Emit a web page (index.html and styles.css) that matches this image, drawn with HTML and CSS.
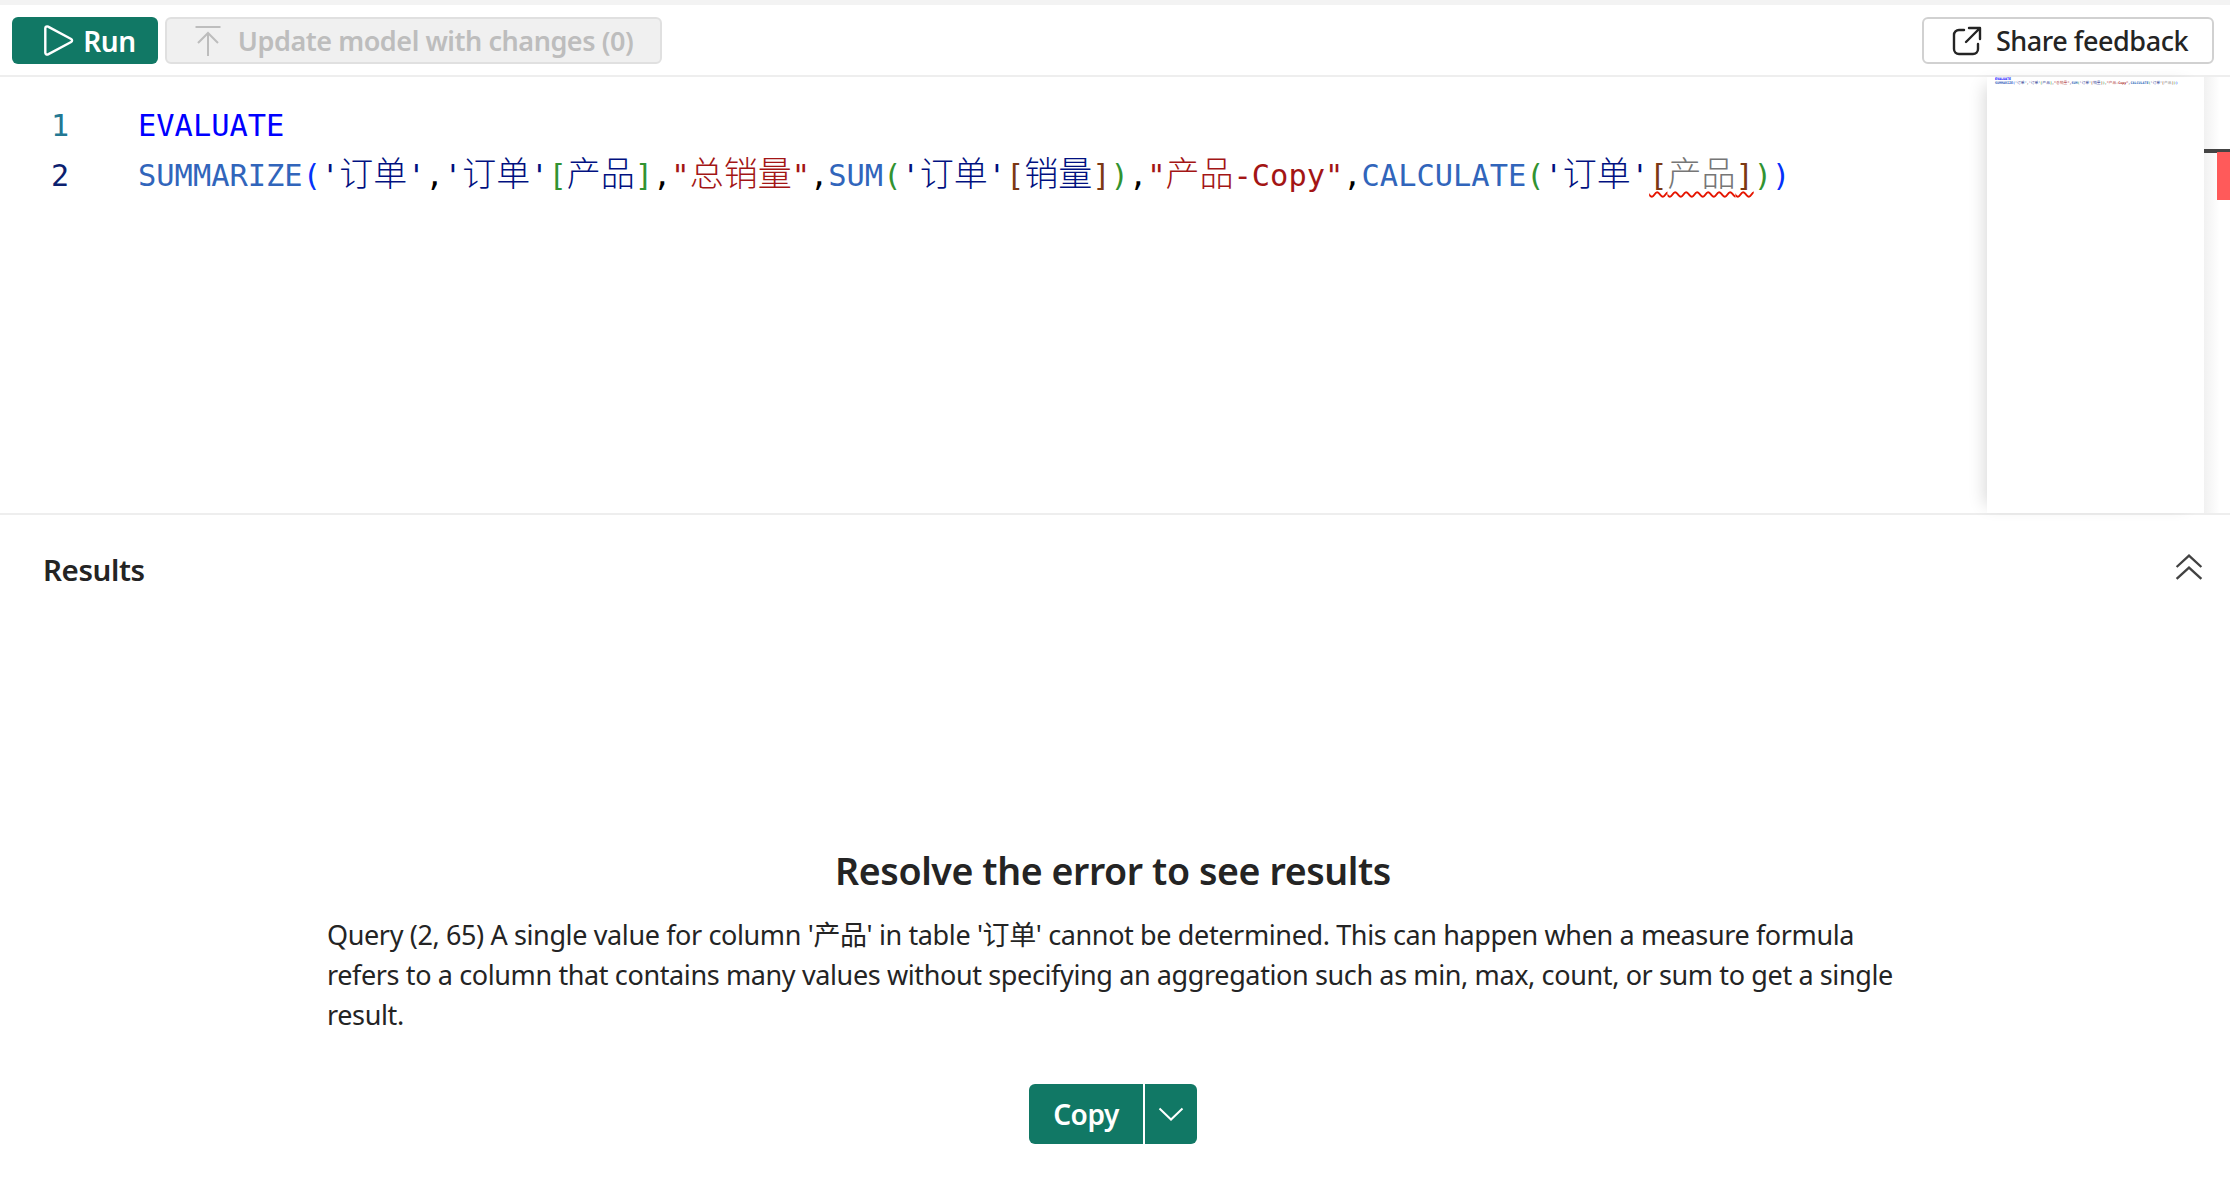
FILE: index.html
```html
<!DOCTYPE html>
<html lang="en">
<head>
<meta charset="utf-8">
<title>DAX query</title>
<link rel="stylesheet" href="styles.css">
</head>
<body>
<div class="page">
  <div class="topshade"></div>
  <header class="toolbar">
    <button class="btn run">
      <svg class="ic-play" viewBox="0 0 30 30"><path d="M3 3.800c0-1.300 1.400-2 2.500-1.400l21 11.200c1.100.6 1.100 2.200 0 2.800l-21 11.200C4.400 28.200 3 27.500 3 26.200z" fill="none" stroke="#fff" stroke-width="2.200" stroke-linejoin="round"/></svg>
      <span>Run</span>
    </button>
    <button class="btn update">
      <svg class="ic-up" viewBox="0 0 28 32"><path d="M1 2h25M13.500 31V8M3.500 18 13.500 8l10 10" fill="none" stroke="#bdbdbd" stroke-width="2"/></svg>
      <span>Update model with changes (0)</span>
    </button>
    <button class="btn share">
      <svg class="ic-share" viewBox="0 0 30 30"><path d="M12 4H7a5 5 0 0 0-5 5v14a5 5 0 0 0 5 5h14a5 5 0 0 0 5-5v-5M17 2h11v11M28 2 14 16" fill="none" stroke="#242424" stroke-width="2.400" stroke-linecap="round" stroke-linejoin="round"/></svg>
      <span>Share feedback</span>
    </button>
  </header>
  <section class="editor">
    <div class="gutter"><div class="ln1">1</div><div class="ln2">2</div></div>
    <div class="code">
      <div class="line"><span class="kw">EVALUATE</span></div>
      <div class="line"><span class="fn">SUMMARIZE</span><span class="p1">(</span><span class="tb">'<i>订单</i>'</span>,<span class="tb">'<i>订单</i>'</span><span class="p2">[</span><span class="tb"><i>产品</i></span><span class="p2">]</span>,<span class="str">"<i>总销量</i>"</span>,<span class="fn">SUM</span><span class="p2">(</span><span class="tb">'<i>订单</i>'</span><span class="p3">[</span><span class="tb"><i>销量</i></span><span class="p3">]</span><span class="p2">)</span>,<span class="str">"<i>产品</i>-Copy"</span>,<span class="fn">CALCULATE</span><span class="p2">(</span><span class="tb">'<i>订单</i>'</span><span class="err"><span class="p3">[</span><span class="gr"><i>产品</i></span><span class="p3">]</span></span><span class="p2">)</span><span class="p1">)</span></div>
    </div>
    <div class="minimap">
      <div class="mm-line"><span class="kw">EVALUATE</span></div>
      <div class="mm-line"><span class="fn">SUMMARIZE</span><span class="p1">(</span><span class="tb">'<i>订单</i>'</span>,<span class="tb">'<i>订单</i>'</span><span class="p2">[</span><span class="tb"><i>产品</i></span><span class="p2">]</span>,<span class="str">"<i>总销量</i>"</span>,<span class="fn">SUM</span><span class="p2">(</span><span class="tb">'<i>订单</i>'</span><span class="p3">[</span><span class="tb"><i>销量</i></span><span class="p3">]</span><span class="p2">)</span>,<span class="str">"<i>产品</i>-Copy"</span>,<span class="fn">CALCULATE</span><span class="p2">(</span><span class="tb">'<i>订单</i>'</span><span class="p3">[</span><span class="gr"><i>产品</i></span><span class="p3">]</span><span class="p2">)</span><span class="p1">)</span></div>
    </div>
    <div class="track"><div class="cursor"></div><div class="mark"></div></div>
  </section>
  <section class="results">
    <div class="res-head">
      <h2>Results</h2>
      <svg class="ic-collapse" viewBox="0 0 26 24"><path d="M1.500 12 13 1.500 24.500 12M1.500 23 13 12.500 24.500 23" fill="none" stroke="#424242" stroke-width="2.200"/></svg>
    </div>
    <div class="res-body">
      <h1>Resolve the error to see results</h1>
      <p>Query (2, 65) A single value for column '产品' in table '订单' cannot be determined. This can happen when a measure formula refers to a column that contains many values without specifying an aggregation such as min, max, count, or sum to get a single result.</p>
      <div class="split">
        <button class="btn copy">Copy</button>
        <button class="btn caret" aria-label="More"><svg class="ic-chev" viewBox="0 0 26 14"><path d="M1.500 1.500 13 12.500 24.500 1.500" fill="none" stroke="#fff" stroke-width="2"/></svg></button>
      </div>
    </div>
  </section>
</div>
</body>
</html>
```
FILE: styles.css
```css
* { box-sizing: border-box; }
html, body { margin: 0; height: 100%; overflow: hidden; background: #fff; }
body { font-family: "Noto Sans", "Noto Sans CJK SC", sans-serif; color: #242424; }
.page { height: 1188px; display: flex; flex-direction: column; overflow: hidden; }
.topshade { height: 5px; background: #f3f3f3; flex: none; }

.toolbar { height: 72px; flex: none; display: flex; align-items: center; padding: 1px 16px 0 12px; gap: 7px; border-bottom: 2px solid #eeeeee; }
.btn { font-family: inherit; font-size: 27px; font-weight: 600; display: flex; align-items: center; justify-content: center; border-radius: 6px; padding: 0; letter-spacing: -0.45px; }
.run { width: 146px; height: 47px; background: #117865; color: #fff; border: none; gap: 8px; font-size: 28px; padding-left: 8px; }
.update { width: 497px; height: 47px; background: #f0f0f0; border: 2px solid #e0e0e0; color: #bdbdbd; gap: 15px; }
.share { width: 292px; height: 47px; margin-left: auto; background: #fff; border: 2px solid #d1d1d1; color: #242424; gap: 14px; font-weight: 500; padding-left: 4px; }
.ic-play { width: 33px; height: 33px; }
.ic-up { width: 29px; height: 32px; }
.ic-share { width: 30px; height: 30px; }

.editor { height: 438px; flex: none; display: flex; border-bottom: 2px solid #eeeeee; }
.gutter { width: 138px; flex: none; padding: 24px 0 0 51px; font: 30.150px/50px "DejaVu Sans Mono", monospace; }
.ln1 { color: #237893; }
.ln2 { color: #0b216f; }
.code { flex: 1; padding-top: 24px; font: 30.400px/50px "DejaVu Sans Mono", "Noto Sans CJK SC", monospace; color: #000; white-space: nowrap; min-width: 0; }
.line { height: 50px; }
.code i, .mm-line i { font-style: normal; font-family: "Noto Sans CJK SC", sans-serif; font-weight: 300; line-height: 0; }
.code i { font-size: 34px; }
.mm-line i { font-size: 3.800px; }
.kw { color: #0000ff; }
.fn { color: #3165bb; }
.p1 { color: #0431fa; }
.p2 { color: #319331; }
.p3 { color: #7b3814; }
.tb { color: #001080; }
.str { color: #a31515; }
.gr { color: #767676; }
.err { text-decoration: underline wavy #e51400 2px; text-underline-offset: 5px; }

.minimap { width: 217px; flex: none; padding: 0 0 0 8px; font: 700 3.340px/4px "DejaVu Sans Mono", monospace; color: #000; background: #fff; box-shadow: -10px 0 16px -8px rgba(0,0,0,.16), 1px 0 0 #c8c8c8; white-space: nowrap; overflow: hidden; }
.mm-line { height: 4px; }
.track { width: 26px; flex: none; position: relative; background: linear-gradient(90deg, #f1f1f1, #fff 60%); }
.cursor { position: absolute; left: 0; right: 0; top: 72px; height: 4px; background: #444; }
.mark { position: absolute; left: 13px; right: 0; top: 75px; height: 48px; background: #ff5a5a; }

.results { flex: 1; min-height: 0; }
.res-head { display: flex; justify-content: space-between; align-items: center; padding: 33px 27px 0 43px; height: 76px; }
.res-head h2 { margin: 0; font-size: 29.500px; line-height: 40px; font-weight: 600; letter-spacing: -0.4px; }
.ic-collapse { width: 28px; height: 26px; margin-bottom: 6px; }
.res-body { width: 1572px; margin-left: 327px; }
.res-body h1 { margin: 256px 0 0; font-size: 37.500px; line-height: 48px; font-weight: 600; text-align: center; letter-spacing: -0.4px; }
.res-body p { margin: 20px 0 0; font-size: 27px; line-height: 40px; letter-spacing: -0.38px; font-weight: 400; }
.split { display: flex; justify-content: center; gap: 2px; margin-top: 49px; }
.copy { width: 114px; height: 60px; background: #117865; color: #fff; border: none; border-radius: 6px 0 0 6px; font-size: 28px; }
.caret { width: 52px; height: 60px; background: #117865; border: none; border-radius: 0 6px 6px 0; }
.ic-chev { width: 26px; height: 14px; }
```
